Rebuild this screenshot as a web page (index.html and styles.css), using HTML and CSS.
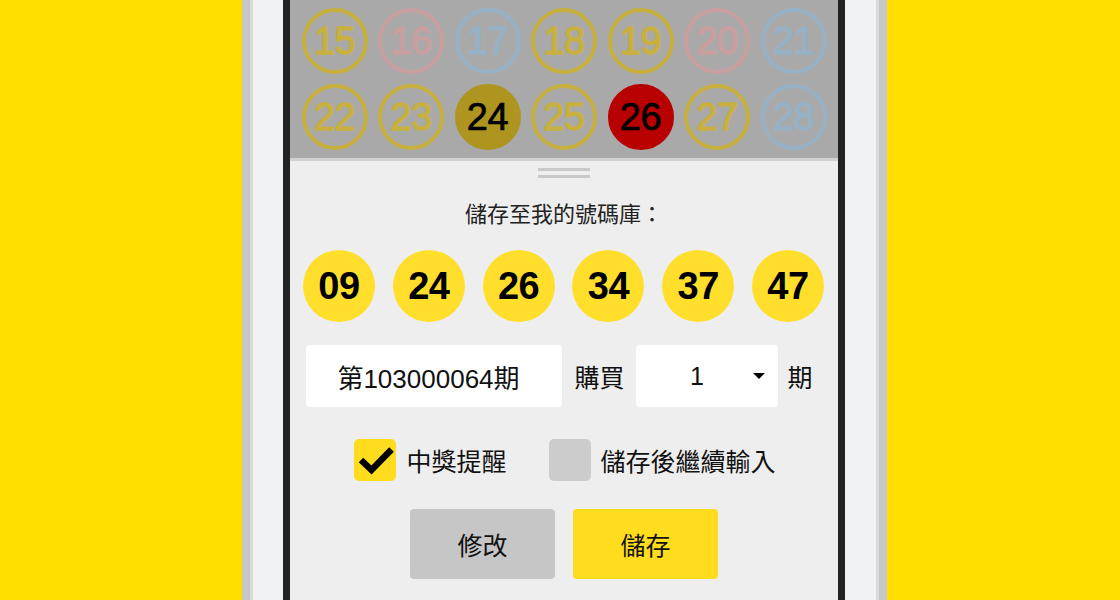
FILE: index.html
```html
<!DOCTYPE html>
<html lang="zh-Hant">
<head>
<meta charset="utf-8">
<title>儲存至我的號碼庫</title>
<link rel="stylesheet" href="styles.css">
</head>
<body>
<div class="stage">
  <div class="phone">
    <div class="bezel">
      <div class="screen">
        <div class="picker">
          <div class="pick-row">
            <span class="pball y">15</span>
            <span class="pball p">16</span>
            <span class="pball b">17</span>
            <span class="pball y">18</span>
            <span class="pball y">19</span>
            <span class="pball p">20</span>
            <span class="pball b">21</span>
          </div>
          <div class="pick-row">
            <span class="pball y">22</span>
            <span class="pball y">23</span>
            <span class="pball gold">24</span>
            <span class="pball y">25</span>
            <span class="pball red">26</span>
            <span class="pball y">27</span>
            <span class="pball b">28</span>
          </div>
        </div>
        <div class="sheet">
          <div class="handle"><i></i><i></i></div>
          <div class="title">儲存至我的號碼庫：</div>
          <div class="balls">
            <span class="ball">09</span>
            <span class="ball">24</span>
            <span class="ball">26</span>
            <span class="ball">34</span>
            <span class="ball">37</span>
            <span class="ball">47</span>
          </div>
          <div class="period-row">
            <div class="field issue">第103000064期</div>
            <span class="label buy">購買</span>
            <div class="field select"><span class="select-val">1</span><span class="caret"></span></div>
            <span class="label unit">期</span>
          </div>
          <div class="check-row">
            <div class="check on">
              <svg width="42" height="42" viewBox="0 0 42 42"><polyline points="7,21 17.5,31 37.5,10.5" fill="none" stroke="#000" stroke-width="6.5"/></svg>
            </div>
            <span class="check-label">中獎提醒</span>
            <div class="check off"></div>
            <span class="check-label">儲存後繼續輸入</span>
          </div>
          <div class="actions">
            <button class="btn edit">修改</button>
            <button class="btn save">儲存</button>
          </div>
        </div>
      </div>
    </div>
  </div>
</div>
</body>
</html>
```

FILE: styles.css
```css
html, body {
  margin: 0;
  padding: 0;
  height: 100%;
  overflow: hidden;
}
body {
  background: #ffde00;
  font-family: "Liberation Sans", "Noto Sans CJK TC", sans-serif;
  color: #111;
}
.stage {
  display: flex;
  justify-content: center;
  padding-left: 9px;
  height: 600px;
}
.phone {
  width: 645px;
  box-sizing: border-box;
  height: 600px;
  border-left: 8px solid #c7c7c7;
  border-right: 8px solid #c7c7c7;
  background: #f1f2f4;
  box-shadow: inset 3px 0 0 #dadada, inset -3px 0 0 #dadada;
  padding: 0 34px 0 33px;
}
.bezel {
  height: 600px;
  border-left: 7px solid #222;
  border-right: 7px solid #222;
}
.screen {
  width: 548px;
  height: 600px;
  overflow: hidden;
  background: #eeeeee;
  display: flex;
  flex-direction: column;
}
.picker {
  background: #a9a9a9;
  padding: 8px 0;
  display: flex;
  flex-direction: column;
  gap: 10px;
  border-bottom: 3px solid #d0d0d0;
}
.pick-row {
  display: flex;
  justify-content: center;
  gap: 10.5px;
}
.pball {
  width: 66px;
  height: 66px;
  box-sizing: border-box;
  border-radius: 50%;
  border: 4px solid currentColor;
  display: flex;
  align-items: center;
  justify-content: center;
  font-size: 38px;
  letter-spacing: -0.5px;
  -webkit-text-stroke: 1.3px currentColor;
}
.pball.y { color: #c8b03e; }
.pball.p { color: #c99e9e; }
.pball.b { color: #96b1c5; }
.pball.gold { background: #ad9520; border-color: #ad9520; color: #000; -webkit-text-stroke: 0.7px #000; }
.pball.red { background: #b80000; border-color: #b80000; color: #000; -webkit-text-stroke: 0.7px #000; }

.sheet {
  display: flex;
  flex-direction: column;
  align-items: center;
  padding-top: 7px;
}
.handle {
  display: flex;
  flex-direction: column;
  gap: 4px;
}
.handle i {
  display: block;
  width: 52px;
  height: 3px;
  background: #c9c9c9;
}
.title {
  margin-top: 22px;
  height: 30px;
  line-height: 30px;
  font-size: 22px;
  color: #222;
}
.balls {
  margin-top: 20px;
  display: flex;
  gap: 17.8px;
  margin-left: -1px;
}
.ball {
  width: 72px;
  height: 72px;
  border-radius: 50%;
  background: #ffdf2c;
  display: flex;
  align-items: center;
  justify-content: center;
  font-weight: bold;
  font-size: 38px;
  letter-spacing: -0.5px;
  color: #000;
}
.period-row {
  margin-top: 23px;
  height: 62px;
  display: flex;
  align-items: center;
  margin-left: -9px;
}
.field {
  height: 62px;
  background: #fff;
  border-radius: 4px;
  display: flex;
  align-items: center;
  font-size: 25px;
}
.issue {
  width: 256px;
  box-sizing: border-box;
  justify-content: center;
  font-size: 26px;
  padding-right: 12px;
}
.label {
  font-size: 25px;
}
.buy { margin: 0 11px 0 12px; }
.unit { margin-left: 10px; }
.select {
  width: 142px;
  padding-right: 13px;
  box-sizing: border-box;
}
.select-val {
  flex: 1;
  text-align: center;
  padding-left: 6px;
}
.caret {
  width: 0;
  height: 0;
  border-left: 6px solid transparent;
  border-right: 6px solid transparent;
  border-top: 6px solid #000;
}
.check-row {
  margin-top: 31px;
  height: 43px;
  display: flex;
  align-items: center;
  margin-left: 2px;
}
.check {
  width: 42px;
  height: 42px;
  border-radius: 5px;
}
.check svg { display: block; }
.check.on { background: #ffdc1e; }
.check.off { background: #cccccc; margin-left: 42px; }
.check-label {
  font-size: 25px;
  margin-left: 10px;
  color: #111;
}
.actions {
  margin-top: 28px;
  display: flex;
  gap: 18px;
}
.btn {
  width: 145px;
  height: 70px;
  border: none;
  border-radius: 4px;
  font-family: "Liberation Sans", "Noto Sans CJK TC", sans-serif;
  font-size: 25px;
  color: #111;
  padding: 0;
}
.btn.edit { background: #c6c6c6; }
.btn.save { background: #ffdc1e; }
```
